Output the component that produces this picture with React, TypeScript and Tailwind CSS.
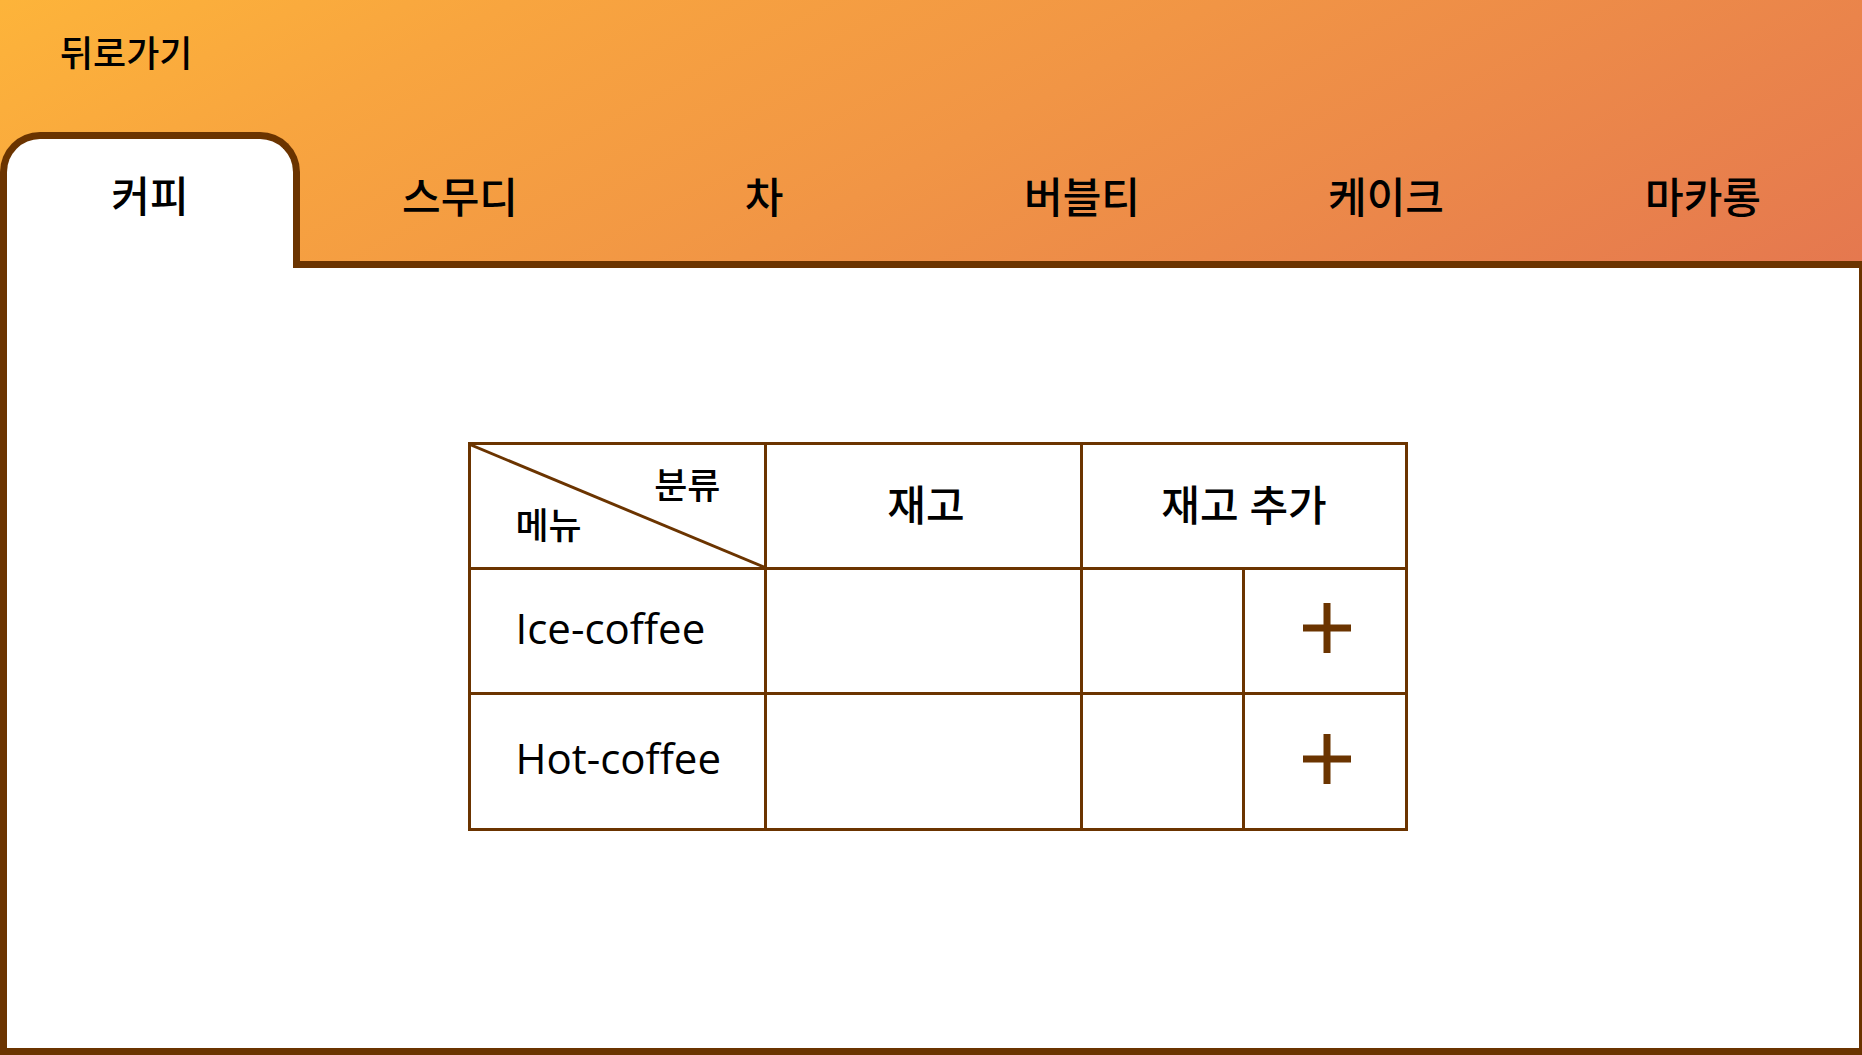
import React from "react";

const tabs = ["커피", "스무디", "차", "버블티", "케이크", "마카롱"];
const menu = ["Ice-coffee", "Hot-coffee"];

function PlusIcon() {
  return (
    <svg width="50" height="50" viewBox="0 0 50 50" aria-hidden="true">
      <path d="M25 0V50M1 25H49" stroke="#6b3400" strokeWidth="7" />
    </svg>
  );
}

export default function App() {
  const [active, setActive] = React.useState(0);
  const cell = "border-[3px] border-[#6b3400] p-0";
  return (
    <div className="flex min-h-screen flex-col font-['Open_Sans','Noto_Sans_CJK_KR',sans-serif] font-medium text-black [font-variant-ligatures:none]">
      <div className="bg-linear-[152deg,#fdb43a,#f8a53f_22%,#f19545_52%,#e5784f]">
        <header className="flex h-[132px] items-start px-[60px] pt-7">
          <button type="button" className="text-[36px] leading-[52px]">
            뒤로가기
          </button>
        </header>
        <nav className="grid grid-cols-[300fr_320fr_288fr_348fr_260fr_346fr]" role="tablist">
          {tabs.map((tab, i) => (
            <button
              key={tab}
              type="button"
              role="tab"
              aria-selected={active === i}
              onClick={() => setActive(i)}
              className={
                "h-[129px] text-[42px] leading-[60px] last:pl-7 " +
                (active === i
                  ? "relative z-10 -mb-[7px] h-[136px] rounded-t-[40px] border-x-7 border-t-7 border-[#6b3400] bg-white pb-4"
                  : "")
              }
            >
              {tab}
            </button>
          ))}
        </nav>
      </div>
      <main className="flex grow flex-col items-center border-y-7 border-r-3 border-l-7 border-[#6b3400] bg-white pt-[174px] pb-10 pl-2.5">
        <table className="w-1/2 min-w-[937px] table-fixed border-collapse">
          <colgroup>
            <col className="w-[296px]" />
            <col className="w-[316px]" />
            <col className="w-[162px]" />
            <col className="w-[162px]" />
          </colgroup>
          <thead>
            <tr className="h-[125px]">
              <th className={cell + " relative font-medium"}>
                <svg className="absolute inset-0 h-full w-full" viewBox="0 0 296 125" preserveAspectRatio="none" aria-hidden="true">
                  <path d="M0 0L296 125" stroke="#6b3400" strokeWidth="3" />
                </svg>
                <div className="flex flex-col px-11 text-[36px] leading-10">
                  <span className="text-right">분류</span>
                  <span className="text-left">메뉴</span>
                </div>
              </th>
              <th className={cell + " pb-1 pl-1 text-[42px] font-medium"}>재고</th>
              <th colSpan={2} className={cell + " pb-1 text-[42px] font-medium"}>
                재고 추가
              </th>
            </tr>
          </thead>
          <tbody>
            {menu.map((name) => (
              <tr key={name} className="h-[125px] last:h-[136px]">
                <th scope="row" className={cell + " pb-2 pl-11 text-left text-[42px] font-medium"}>
                  {name}
                </th>
                <td className={cell}></td>
                <td className={cell}></td>
                <td className={cell + " pb-1.5 pl-1"}>
                  <button type="button" aria-label={name + " 추가"} className="flex w-full justify-center">
                    <PlusIcon />
                  </button>
                </td>
              </tr>
            ))}
          </tbody>
        </table>
      </main>
    </div>
  );
}
